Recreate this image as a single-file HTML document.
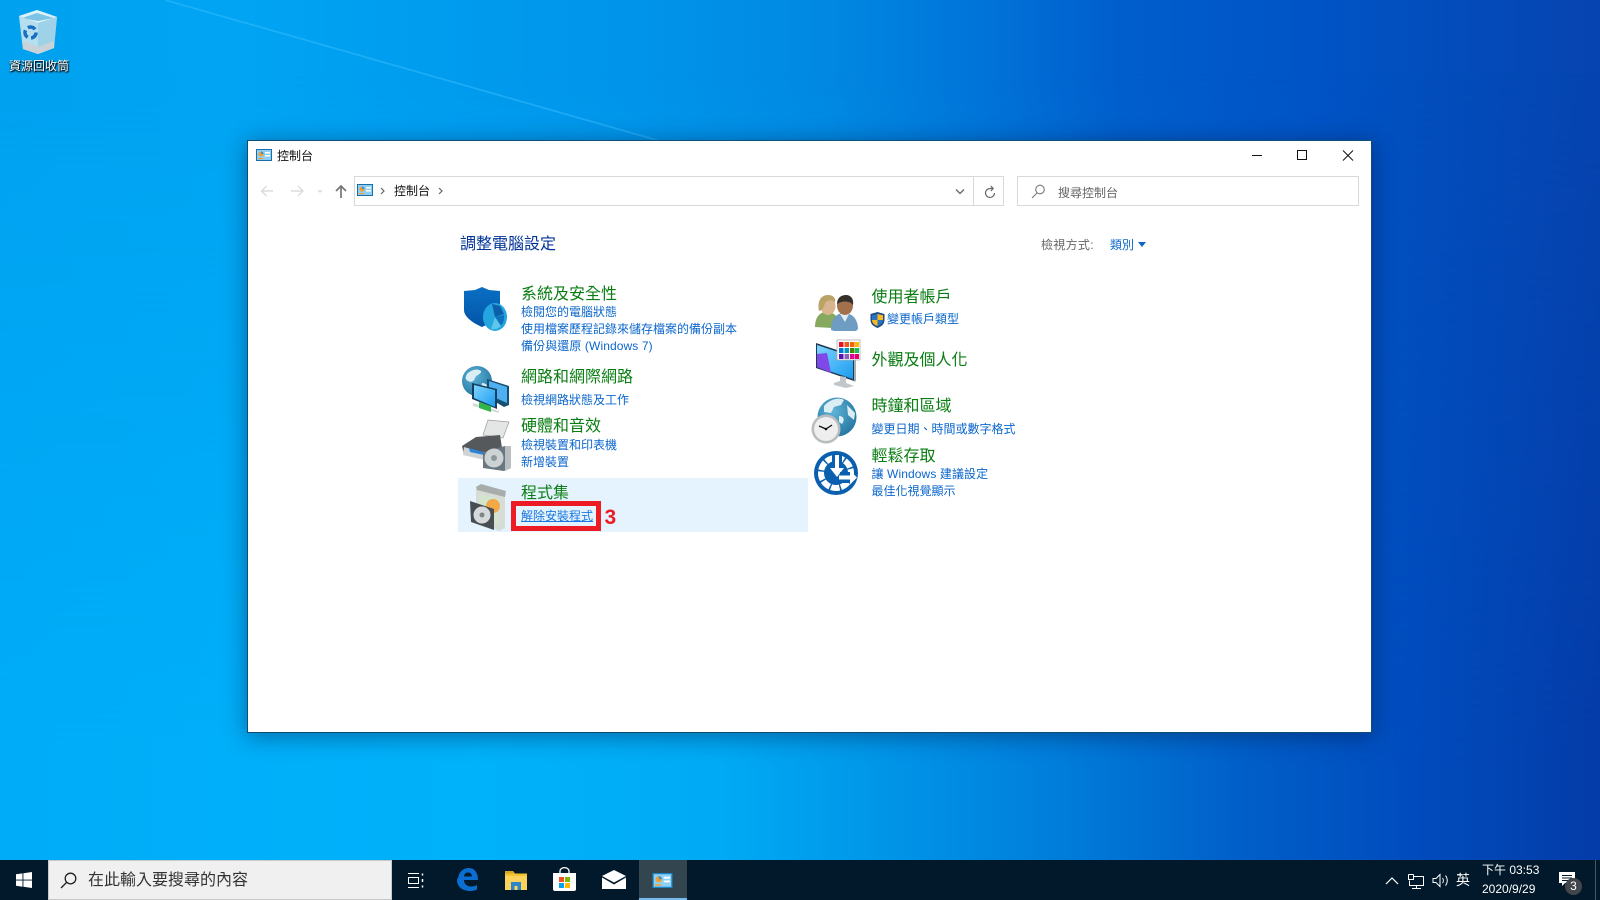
<!DOCTYPE html>
<html lang="zh-Hant"><head><meta charset="utf-8"><title>控制台</title>
<style>
html,body{margin:0;padding:0;width:1600px;height:900px;overflow:hidden}
body{position:relative;font-family:"Liberation Sans","Noto Sans CJK TC",sans-serif;background:#00a6f0}
.bg{position:absolute;left:0;top:0;width:1600px;height:900px}
.t{position:absolute;white-space:nowrap;line-height:20px;height:20px;font-size:12px}
.h{font-size:16px;color:#0a7d12}
.l{color:#0a66cc}
svg{position:absolute;overflow:visible}
</style></head><body>
<div class="bg" style="background:linear-gradient(90deg,#00a2f0 0%,#00a4f2 15%,#0094ea 40%,#0088e2 52%,#0072d8 62%,#005ecc 70%,#0054c6 82%,#0644b0 100%)"></div>
<div class="bg" style="background:linear-gradient(90deg,#00acf8 0%,#00b2fa 30%,#00aaf4 45%,#0096e8 55%,#0080dc 65%,#005ec8 78%,#004cbe 88%,#043ca8 100%);-webkit-mask-image:linear-gradient(to bottom,transparent 8%,#000 85%);mask-image:linear-gradient(to bottom,transparent 8%,#000 85%)"></div>
<svg style="left:0;top:0" width="1600" height="900" viewBox="0 0 1600 900">
<defs>
<linearGradient id="sh" x1="0" y1="0" x2="0" y2="1"><stop offset="0" stop-color="#0a6fc4"/><stop offset="1" stop-color="#0355a8"/></linearGradient>
<radialGradient id="gl" cx=".4" cy=".35" r=".8"><stop offset="0" stop-color="#5fb4d8"/><stop offset="1" stop-color="#1c6d98"/></radialGradient>
<linearGradient id="sc" x1="0" y1="0" x2="1" y2="1"><stop offset="0" stop-color="#7fd4ff"/><stop offset="1" stop-color="#1b9cf0"/></linearGradient>
</defs>
<line x1="165" y1="0" x2="660" y2="141" stroke="#38bcff" stroke-width="1.800" opacity=".5"/>
</svg>

<!-- recycle bin -->
<svg style="left:17px;top:8px" width="42" height="46" viewBox="0 0 42 46">
<polygon points="2,8 20,2 40,9 37,40 21,46 6,41" fill="#a9d8ec" opacity=".9"/>
<polygon points="2,8 20,2 40,9 21,15" fill="#dff1f8"/>
<polygon points="5,10 20,5 37,10 21,13" fill="#7cc4e6"/>
<polygon points="2,8 21,15 21,46 6,41" fill="#b5deef"/>
<polygon points="21,15 40,9 37,40 21,46" fill="#9dd2e8"/>
<polygon points="5,33 21,39 37,33 37,40 21,46 6,41" fill="#c9d2d6"/>
<circle cx="13.500" cy="24.500" r="5.500" fill="none" stroke="#1770c4" stroke-width="3.500" stroke-dasharray="8 3.500"/>
</svg>
<div class="t" style="left:9px;top:56px;color:#fff;text-shadow:0 1px 2px #000,1px 1px 1px #000">資源回收筒</div>

<!-- window -->
<div style="position:absolute;left:247px;top:140px;width:1123px;height:591px;background:#fff;border:1px solid #0e4e75;box-shadow:0 3px 22px rgba(0,20,60,.45)"></div>

<svg style="left:256px;top:149px" width="16" height="12" viewBox="0 0 16 12"><rect x=".5" y=".5" width="15" height="11" fill="#8fcff5" stroke="#1a6ea8"/><circle cx="5" cy="5" r="2.600" fill="#f0a030"/><path d="M5 5V2.400a2.600 2.600 0 0 1 2.600 2.600z" fill="#3e8fd0"/><rect x="9" y="3" width="5" height="1.500" fill="#fff"/><rect x="9" y="6" width="5" height="1.500" fill="#fff"/><rect x="2" y="9" width="5" height="1.200" fill="#f0a030"/></svg>
<div class="t" style="left:277px;top:146px;color:#111">控制台</div>

<svg style="left:1250px;top:148px" width="110" height="16" viewBox="0 0 110 16" fill="none" stroke="#111" stroke-width="1">
<line x1="2" y1="7.500" x2="12" y2="7.500"/><rect x="47.500" y="2.500" width="9" height="9"/><path d="M93 2.500l10 10M103 2.500l-10 10"/></svg>

<!-- nav arrows -->
<svg style="left:260px;top:182px" width="92" height="18" viewBox="0 0 92 18" fill="none" stroke-width="1.400">
<path d="M13 9H1.500M6.500 4L1.500 9l5 5" stroke="#dcdcdc"/>
<path d="M31 9h12M38 4l5 5-5 5" stroke="#dcdcdc"/>
<path d="M58 8l2 2 2-2" stroke="#dcdcdc"/>
<path d="M81 16V4M76 9l5-5 5 5" stroke="#777" stroke-width="1.700"/>
</svg>
<div style="position:absolute;left:354px;top:176px;width:648px;height:28px;border:1px solid #d9d9d9"></div>
<div style="position:absolute;left:973px;top:176px;width:1px;height:30px;background:#d9d9d9"></div>
<svg style="left:357px;top:184px" width="16" height="12" viewBox="0 0 16 12"><rect x=".5" y=".5" width="15" height="11" fill="#8fcff5" stroke="#1a6ea8"/><circle cx="5" cy="5" r="2.600" fill="#f0a030"/><path d="M5 5V2.400a2.600 2.600 0 0 1 2.600 2.600z" fill="#3e8fd0"/><rect x="9" y="3" width="5" height="1.500" fill="#fff"/><rect x="9" y="6" width="5" height="1.500" fill="#fff"/><rect x="2" y="9" width="5" height="1.200" fill="#f0a030"/></svg>
<svg style="left:378px;top:186px" width="70" height="10" viewBox="0 0 70 10" fill="none" stroke="#666" stroke-width="1.200"><path d="M3 2l3 3-3 3M61 2l3 3-3 3"/></svg>
<div class="t" style="left:394px;top:181px;color:#111">控制台</div>
<svg style="left:954px;top:186px" width="44" height="14" viewBox="0 0 44 14" fill="none" stroke="#666" stroke-width="1.300"><path d="M2 3.500l4 4 4-4"/><path d="M40.500 7a4.500 4.500 0 1 1-4.500-4.500H39M36.800 0l2.400 2.500L36.800 5" stroke-width="1.200"/></svg>

<div style="position:absolute;left:1017px;top:176px;width:340px;height:28px;border:1px solid #d9d9d9"></div>
<svg style="left:1031px;top:184px" width="15" height="15" viewBox="0 0 15 15" fill="none" stroke="#777" stroke-width="1.100"><circle cx="9" cy="5.500" r="4.300"/><path d="M6 9l-5 5"/></svg>
<div class="t" style="left:1058px;top:182px;color:#666;margin-top:1px">搜尋控制台</div>

<div class="t" style="left:460px;top:235px;font-size:16px;color:#003399">調整電腦設定</div>
<div class="t" style="left:1041px;top:235px;color:#666;letter-spacing:.3px">檢視方式:</div>
<div class="t l" style="left:1110px;top:235px">類別</div>
<svg style="left:1138px;top:242px" width="8" height="5" viewBox="0 0 8 5"><path d="M0 0h8L4 5z" fill="#0a66cc"/></svg>

<!-- left col -->
<div style="position:absolute;left:458px;top:478px;width:350px;height:54px;background:#e5f3ff"></div>

<svg style="left:462px;top:285px" width="48" height="48" viewBox="0 0 48 48">
<path d="M20 2l7 3 11 1v19c0 7-9 13-18 17C11 38 2 32 2 25V6l11-1z" fill="url(#sh)"/>
<ellipse cx="33" cy="32" rx="12" ry="14" fill="#23a5df"/><path d="M33 32l-3-13 8 2 4 8z" fill="#0d5ea8"/><path d="M33 32l9-2a12 14 0 0 1-3 11z" fill="#0f70bb"/><path d="M33 32l6 9a12 14 0 0 1-10 3z" fill="#5ec5ec"/>
</svg>
<div class="t h" style="left:521px;top:285px">系統及安全性</div>
<div class="t l" style="left:521px;top:302px">檢閱您的電腦狀態</div>
<div class="t l" style="left:521px;top:319px">使用檔案歷程記錄來儲存檔案的備份副本</div>
<div class="t l" style="left:521px;top:336px;letter-spacing:.1px">備份與還原 (Windows 7)</div>

<svg style="left:461px;top:365px" width="50" height="48" viewBox="0 0 50 48">
<circle cx="16" cy="16" r="15" fill="url(#gl)"/><path d="M6 9c4-4 10-6 14-3 1 3-5 4-6 7s-3 5-7 3-2-5-1-7zM21 18c4 0 7 3 5 8-3 3-6 1-6-3z" fill="#d9eef5"/>
<polygon points="26,14 48,21 48,40 43,42 26,32" fill="#16506f"/><polygon points="28,16 46,22 46,38 28,30" fill="#50aff0"/>
<polygon points="11,18 36,24 36,44 11,34" fill="#14405f"/><polygon points="13,20 34,25 34,42 13,33" fill="url(#sc)"/>
<polygon points="12,38 38,46 38,48 12,41" fill="#d6d9da"/><polygon points="18,37 30,41 30,47 18,43" fill="#2fb54a"/>
</svg>
<div class="t h" style="left:521px;top:368px">網路和網際網路</div>
<div class="t l" style="left:521px;top:390px">檢視網路狀態及工作</div>

<svg style="left:461px;top:418px" width="52" height="54" viewBox="0 0 52 54">
<polygon points="22,17 27,2 48,4 42,20" fill="#e4e6e6" stroke="#9a9d9e" stroke-width=".7"/>
<path d="M1 28l14-9 24-2 2 13-12 12-26-5z" fill="#55595c"/><path d="M3 29l24 7 1 7-26-6z" fill="#d0d3d4"/><path d="M8 30l14 4 1 3-14-3z" fill="#2b83d8"/>
<path d="M22 34l22-6 6 0 0 22-7 3-21-3z" fill="#6a7680"/><path d="M44 28l6 0 0 22-6 3z" fill="#b9bec1"/>
<circle cx="33" cy="40" r="9.500" fill="#cdd2d5"/><circle cx="33" cy="40" r="3" fill="#8d979e"/>
</svg>
<div class="t h" style="left:521px;top:417px">硬體和音效</div>
<div class="t l" style="left:521px;top:435px">檢視裝置和印表機</div>
<div class="t l" style="left:521px;top:452px">新增裝置</div>

<svg style="left:469px;top:484px" width="38" height="48" viewBox="0 0 38 48">
<polygon points="7,3 36,11 36,44 30,47 7,35" fill="#d8dcd6"/><polygon points="7,3 12,0 37,7 36,13 8,6" fill="#a8adab"/>
<polygon points="10,10 30,15 30,40 10,32" fill="#d3e5cd"/><circle cx="24" cy="22" r="7" fill="#f1a948"/>
<polygon points="1,17 25,25 25,46 2,38" fill="#474d50"/><circle cx="13" cy="31" r="8.500" fill="#d5d9db"/><circle cx="13" cy="31" r="2.500" fill="#7e868a"/>
</svg>
<div class="t h" style="left:521px;top:484px">程式集</div>
<div style="position:absolute;left:511px;top:501px;width:80px;height:20px;border:5px solid #ed1c24"></div>
<div class="t l" style="left:521px;top:506px;text-decoration:underline;color:#1a78e0">解除安裝程式</div>
<div class="t" style="left:604.500px;top:508px;font-size:21px;font-weight:bold;color:#ed1c24">3</div>

<!-- right col -->
<svg style="left:814px;top:294px" width="46" height="38" viewBox="0 0 46 38">
<path d="M1 33c0-10 5-15 11-15 7 0 12 4 12 9l-6 7z" fill="#86a95f"/>
<ellipse cx="14" cy="12" rx="7.500" ry="9" fill="#d8b48f"/><path d="M5 17C3 7 7 1 14 1c5 0 8 3 7 7-4-3-8-2-10 1-1 4-2 7-6 8z" fill="#b9a465"/>
<path d="M17 36c0-12 6-17 13-17 8 0 14 6 14 16l-2 2H20z" fill="#6f9cc3"/><path d="M26 20l5 8 4-8z" fill="#e4edf3"/>
<ellipse cx="31" cy="11.500" rx="8" ry="9.500" fill="#a2704d"/><path d="M23 10c0-6 4-9 9-9 5 0 8 4 7 10-3-4-10-5-16-1z" fill="#36302b"/>
</svg>
<div class="t h" style="left:871.500px;top:288px">使用者帳戶</div>
<svg style="left:870px;top:312px" width="15" height="16" viewBox="0 0 15 16"><path d="M7.500 0l7 2v6c0 4-3 6.500-7 8-4-1.500-7-4-7-8V2z" fill="#1d4e88"/><path d="M7.500 2v6h5.500V3.200zM7.500 8v6c-3-1-5.500-3-5.500-6z" fill="#f9b81b"/><path d="M7.500 2v6H2V3.200zM7.500 8v6c3-1 5.500-3 5.500-6z" fill="#2a73c0"/></svg>
<div class="t l" style="left:887px;top:309px">變更帳戶類型</div>

<svg style="left:815px;top:340px" width="46" height="48" viewBox="0 0 46 48">
<polygon points="1,3 40,16 39,41 1,28" fill="#1f3a4f"/><polygon points="2,5 38,17 38,39 2,27" fill="url(#sc)"/><polygon points="2,14 12,13 16,33 2,27" fill="#8048e8"/>
<path d="M25 36v5l-6 2 0 2 12 3 8-2-8-3v-6z" fill="#c2c6c8"/><polygon points="39,16 41,15 41,41 39,42" fill="#a8adb0"/>
<rect x="22" y="0" width="23" height="20" fill="#fff" stroke="#a8adb0" stroke-width=".8"/>
<g><rect x="24" y="2" width="4.500" height="5" fill="#e81123"/><rect x="29.500" y="2" width="4.500" height="5" fill="#ea5a20"/><rect x="35" y="2" width="4.500" height="5" fill="#f7630c"/><rect x="40" y="2" width="4" height="5" fill="#ffb900"/>
<rect x="24" y="8" width="4.500" height="5" fill="#0078d7"/><rect x="29.500" y="8" width="4.500" height="5" fill="#0099bc"/><rect x="35" y="8" width="4.500" height="5" fill="#498205"/><rect x="40" y="8" width="4" height="5" fill="#10c060"/>
<rect x="24" y="14" width="4.500" height="5" fill="#5c12b0"/><rect x="29.500" y="14" width="4.500" height="5" fill="#8764b8"/><rect x="35" y="14" width="4.500" height="5" fill="#e3008c"/><rect x="40" y="14" width="4" height="5" fill="#e3006c"/></g>
</svg>
<div class="t h" style="left:871.500px;top:351px">外觀及個人化</div>

<svg style="left:811px;top:397px" width="48" height="48" viewBox="0 0 48 48">
<circle cx="26" cy="20" r="19.500" fill="url(#gl)"/><path d="M13 9c6-7 15-9 20-6l-3 5-7 2-3 6-7-1zM36 8l8 8-1 7-6-5zM28 19c5 0 6 4 3 8l-3-2z" fill="#dcedf3"/>
<circle cx="15" cy="32" r="14.500" fill="#b9bcbe"/><circle cx="15" cy="32" r="12" fill="#eeeeee"/><path d="M15 32l6-4M15 32l-7-3" stroke="#111" stroke-width="1.300" fill="none"/><circle cx="15" cy="32" r="1.300" fill="#111"/>
</svg>
<div class="t h" style="left:871.500px;top:397px">時鐘和區域</div>
<div class="t l" style="left:871.500px;top:419px">變更日期、時間或數字格式</div>

<svg style="left:814px;top:451px" width="44" height="44" viewBox="0 0 44 44">
<circle cx="22" cy="22" r="22" fill="#0a5fae"/><circle cx="22" cy="22" r="15" fill="none" stroke="#fff" stroke-width="6" stroke-dasharray="8.500 1.500"/>
<circle cx="22" cy="22" r="11" fill="#0a5fae"/>
<rect x="18" y="3" width="10" height="20" fill="#0a5fae"/><rect x="21" y="4" width="4" height="17" fill="#fff"/><path d="M16 17h14l-7 9z" fill="#fff"/>
<path d="M26 21h10v11H26z" fill="#0a5fae"/><path d="M25 24.500h11v-5l7 7-7 7v-5H25z" fill="#fff"/>
</svg>
<div class="t h" style="left:871.500px;top:447px">輕鬆存取</div>
<div class="t l" style="left:871.500px;top:464px;letter-spacing:.1px">讓 Windows 建議設定</div>
<div class="t l" style="left:871.500px;top:481px">最佳化視覺顯示</div>

<!-- taskbar -->
<div style="position:absolute;left:0;top:860px;width:1600px;height:40px;background:#01192a"></div>
<svg style="left:16px;top:872px" width="16" height="16" viewBox="0 0 16 16" fill="#fff"><path d="M0 2.300l6.500-.9v6.200H0zM7.400 1.300L16 0v7.600H7.400zM0 8.500h6.500v6.200L0 13.800zM7.400 8.500H16V16l-8.600-1.200z"/></svg>
<div style="position:absolute;left:48px;top:860px;width:344px;height:40px;background:#f0f0f0;box-sizing:border-box;border:1px solid #c8c8c8"></div>
<svg style="left:60px;top:872px" width="17" height="17" viewBox="0 0 17 17" fill="none" stroke="#222" stroke-width="1.300"><circle cx="10.500" cy="6.500" r="5.300"/><path d="M6.500 10.500L1 16"/></svg>
<div class="t" style="left:88px;top:871px;font-size:16px;color:#333">在此輸入要搜尋的內容</div>

<svg style="left:408px;top:873px" width="16" height="15" viewBox="0 0 16 15" fill="none" stroke="#fff" stroke-width="1"><path d="M0 .5h11M0 14.500h11"/><rect x=".5" y="4.500" width="10" height="6"/><path d="M14.500 .5v2M14.500 6v3M14.500 12.500v2" stroke-width="1.500"/></svg>
<svg style="left:457px;top:868px" width="21" height="23" viewBox="0 0 21 23"><path d="M1 10C2 4 6 0 12 0c5 0 9 4 9 12H7c0 4 3 6.500 7 6.500 2.500 0 4.500-.7 6-1.500v4.500c-2 1-4 1.500-7 1.500C6 23 0 19 0 12c0-1 .5-1.500 1-2zM7 8.500h8C15 6 13.500 4.500 11 4.500S7.300 6 7 8.500z" fill="#0a6fd1"/></svg>
<svg style="left:505px;top:871px" width="22" height="19" viewBox="0 0 22 19"><path d="M0 0h8l2 2.500h12V19H0z" fill="#f4c430"/><path d="M0 0h8l2 2.500H0z" fill="#d9a420"/><rect x="0" y="5" width="22" height="14" fill="#fbd35c"/><rect x="6" y="11" width="10" height="8" fill="#2a86c8"/><rect x="9.500" y="15" width="3" height="4" fill="#fbd35c"/></svg>
<svg style="left:553px;top:868px" width="23" height="23" viewBox="0 0 23 23"><path d="M0 5h23v16a2 2 0 0 1-2 2H2a2 2 0 0 1-2-2z" fill="#fff"/><path d="M7 5V3a4 3 0 0 1 9 0v2" fill="none" stroke="#fff" stroke-width="1.300"/><rect x="6" y="9" width="5" height="5" fill="#f25022"/><rect x="12" y="9" width="5" height="5" fill="#7fba00"/><rect x="6" y="15" width="5" height="5" fill="#00a4ef"/><rect x="12" y="15" width="5" height="5" fill="#ffb900"/></svg>
<svg style="left:602px;top:870px" width="24" height="19" viewBox="0 0 24 19" fill="#fff"><path d="M0 6L12 0l12 6-12 6.500z"/><path d="M0 7.500l12 7 12-7V19H0z"/></svg>
<div style="position:absolute;left:639px;top:860px;width:48px;height:40px;background:#33454f"></div>
<div style="position:absolute;left:639px;top:898px;width:48px;height:2px;background:#76b9ed"></div>
<svg style="left:652px;top:873px" width="21" height="15" viewBox="0 0 16 12"><rect x=".5" y=".5" width="15" height="11" fill="#8fd0f5" stroke="#1a88c8"/><circle cx="5" cy="5" r="2.600" fill="#f0a030"/><path d="M5 5V2.400a2.600 2.600 0 0 1 2.600 2.600z" fill="#3e8fd0"/><rect x="9" y="3" width="5" height="1.500" fill="#fff"/><rect x="9" y="6" width="5" height="1.500" fill="#fff"/><rect x="2" y="9" width="5" height="1.200" fill="#f0a030"/></svg>

<svg style="left:1385px;top:872px" width="70" height="18" viewBox="0 0 70 18" fill="none" stroke="#fff" stroke-width="1"><path d="M1 12l6-6 6 6" stroke-width="1.200"/><path d="M23.500 2.500h5M23.500 2.500v5h5v-5M28.500 4.500h10v9h-14v-5M31.500 13.500v2.500M27 16.500h9"/><path d="M48 6.500h3l4-4v12l-4-4h-3zM57.500 6a4 4 0 0 1 0 5M60.500 3.500a8 8 0 0 1 0 10"/></svg>
<div class="t" style="left:1456px;top:870px;font-size:14px;color:#fff">英</div>
<div class="t" style="left:1482px;top:860px;color:#fff">下午 03:53</div>
<div class="t" style="left:1482px;top:879px;color:#fff">2020/9/29</div>
<svg style="left:1559px;top:872px" width="17" height="14" viewBox="0 0 17 14"><path d="M0 0h16v11H6l-3 3v-3H0z" fill="#fff"/><path d="M3 3.500h10M3 6h10M3 8.500h7" stroke="#01192a"/></svg>
<div style="position:absolute;left:1565px;top:878px;width:17px;height:17px;border-radius:50%;background:#40464c;color:#fff;font-size:12px;line-height:17px;text-align:center">3</div>
<div style="position:absolute;left:1595px;top:860px;width:1px;height:40px;background:#4a5660"></div>
</body></html>
